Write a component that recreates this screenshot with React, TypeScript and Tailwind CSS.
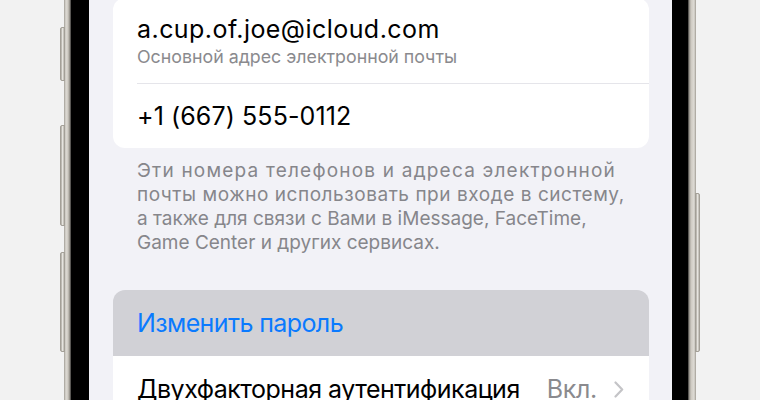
import React from "react";

export default function App() {
  const font = { fontFamily: "Inter, 'Noto Sans', sans-serif" };
  const btn = "absolute w-[5px] bg-[linear-gradient(90deg,#a8a49c,#e6e4df_50%,#b9b5ad)] border border-[#a39f97]";
  return (
    <div className="w-[760px] h-[400px] bg-[#f2f2f2] overflow-hidden flex justify-center" style={font}>
      <div className="relative w-[632px] h-[400px] flex">
        {/* side buttons */}
        <div className={`${btn} left-[-4px] top-[27px] h-[54px] rounded-l-[2px]`} />
        <div className={`${btn} left-[-4px] top-[125px] h-[101px] rounded-l-[2px]`} />
        <div className={`${btn} left-[-4px] top-[252px] h-[100px] rounded-l-[2px]`} />
        <div className={`${btn} right-[-4px] top-[193px] h-[159px] rounded-r-[2px]`} />
        {/* titanium frame */}
        <div className="w-full h-full flex bg-[linear-gradient(90deg,#a19d95_0px,#dedbd5_2px,#cdc9c1_4px,#8a867f_6px,#2a2a2a_7px,#000_8px,#000_calc(100%-9px),#2a2a2a_calc(100%-8px),#8a867f_calc(100%-7px),#cdc9c1_calc(100%-5px),#dedbd5_calc(100%-2px),#a19d95_100%)] pl-[7px] pr-[8px]">
          <div className="flex-1 h-full bg-black pl-[18px] pr-[16px] flex">
            {/* screen */}
            <div className="flex-1 h-full bg-[#f2f2f7] flex flex-col pl-[24px] pr-[23px] overflow-hidden">
              <div className="shrink-0 -mt-[2px] bg-white rounded-[12px] flex flex-col">
                <div className="h-[86px] ml-[24px] border-b border-[#e5e5ea] flex flex-col pt-[16px]">
                  <div className="text-[25px] leading-[30px] text-black tracking-[0.45px]">a.cup.of.joe@icloud.com</div>
                  <div className="text-[17.8px] leading-[22px] text-[#8a8a8e] mt-[2px]">Основной адрес электронной почты</div>
                </div>
                <div className="h-[64px] pl-[24px] flex items-center">
                  <div className="text-[25px] leading-[30px] text-black tracking-[0.1px]">+1 (667) 555-0112</div>
                </div>
              </div>
              <div className="shrink-0 px-[24px] mt-[11px] text-[19px] leading-[24px] text-[#86868b] whitespace-nowrap">
                <div className="tracking-[1.2px]">Эти номера телефонов и адреса электронной</div>
                <div className="tracking-[0.55px]">почты можно использовать при входе в систему,</div>
                <div>а также для связи с Вами в iMessage, FaceTime,</div>
                <div>Game Center и других сервисах.</div>
              </div>
              <div className="shrink-0 mt-[35px] rounded-t-[12px] overflow-hidden flex flex-col">
                <div className="shrink-0 h-[66px] bg-[#d1d1d6] pl-[24px] flex items-center">
                  <div className="text-[25px] leading-[30px] text-[#0a7aff] tracking-[-0.6px]">Изменить пароль</div>
                </div>
                <div className="shrink-0 h-[66px] bg-white pl-[24px] pr-[25px] flex items-center">
                  <div className="flex-1 text-[25px] leading-[30px] text-black tracking-[-0.5px]">Двухфакторная аутентификация</div>
                  <div className="text-[25px] leading-[30px] text-[#8a8a8e] tracking-[-0.3px]">Вкл.</div>
                  <svg width="10" height="17" viewBox="0 0 10 17" className="ml-[17px]">
                    <path d="M1.5 1.5 L8.2 8.5 L1.5 15.5" fill="none" stroke="#c4c4c7" strokeWidth="2.2" strokeLinecap="round" strokeLinejoin="round" />
                  </svg>
                </div>
              </div>
            </div>
          </div>
        </div>
      </div>
    </div>
  );
}
